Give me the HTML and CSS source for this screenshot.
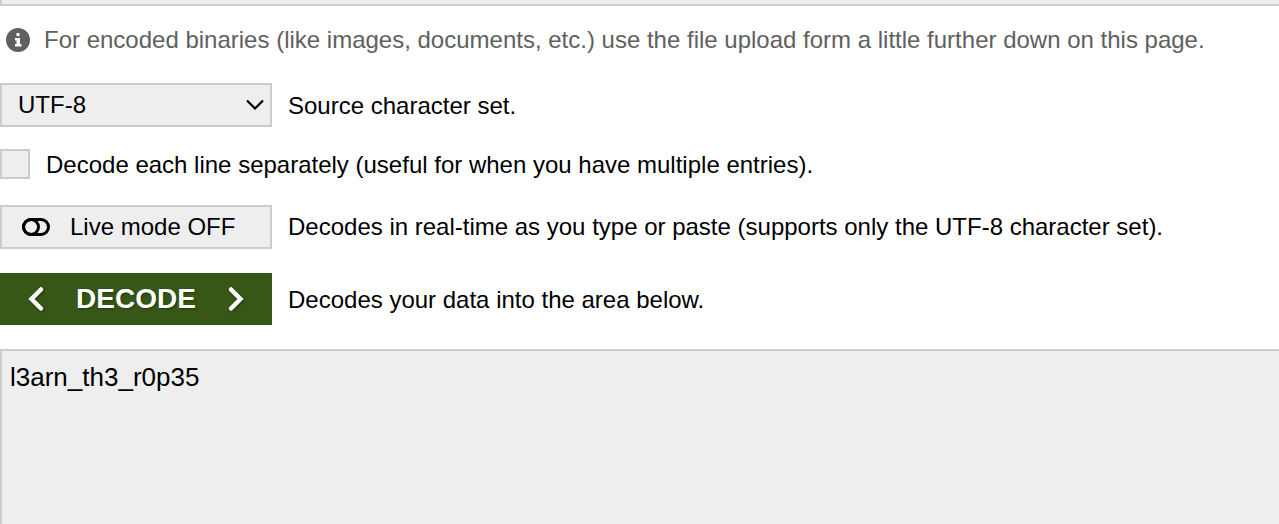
FILE: index.html
```html
<!DOCTYPE html>
<html lang="en">
<head>
<meta charset="utf-8">
<meta name="viewport" content="width=device-width, initial-scale=1">
<title>Decode</title>
<link rel="stylesheet" href="styles.css">
</head>
<body>
<form class="decoder">
  <textarea class="field source" aria-label="Data to decode"></textarea>
  <p class="note">
    <svg class="info-icon" viewBox="0 0 24 24" aria-hidden="true"><circle cx="12" cy="12" r="12" fill="#606060"/><path fill="#fff" d="M10.500 5h3v3h-3zM9 10h5v6h1.500v2.500h-6.500V16h1.500v-3.500H9z"/></svg>
    <span>For encoded binaries (like images, documents, etc.) use the file upload form a little further down on this page.</span>
  </p>
  <div class="row charset-row">
    <span class="select-box">
      <select class="control select" id="charset"><option>UTF-8</option></select>
      <svg class="arrow" viewBox="0 0 18 12" aria-hidden="true"><path d="M1 1.500 9 9.500 17 1.500" fill="none" stroke="#000" stroke-width="2.200"/></svg>
    </span>
    <label class="caption" for="charset">Source character set.</label>
  </div>
  <div class="row lines-row">
    <input class="check" type="checkbox" id="lines">
    <label class="caption" for="lines">Decode each line separately (useful for when you have multiple entries).</label>
  </div>
  <div class="row live-row">
    <button class="control live" type="button">
      <svg class="toggle" viewBox="0 0 28 18" aria-hidden="true"><g fill="none" stroke="#000" stroke-width="3"><rect x="1.500" y="1.500" width="25" height="15" rx="7.500"/><circle cx="9" cy="9" r="7.500"/></g><path d="M9 0h10v3H13z"/><path d="M9 18h10v-3H13z"/></svg>
      <span>Live mode OFF</span>
    </button>
    <span>Decodes in real-time as you type or paste (supports only the UTF-8 character set).</span>
  </div>
  <div class="row decode-row">
    <button class="decode" type="button">
      <svg class="chevron" viewBox="0 0 16 24" aria-hidden="true"><path d="M13 2.500 3.500 12 13 21.500" fill="none" stroke="#fff" stroke-width="4.500" stroke-linecap="round"/></svg>
      <span>DECODE</span>
      <svg class="chevron" viewBox="0 0 16 24" aria-hidden="true"><path d="M3 2.500 12.500 12 3 21.500" fill="none" stroke="#fff" stroke-width="4.500" stroke-linecap="round"/></svg>
    </button>
    <span class="caption">Decodes your data into the area below.</span>
  </div>
  <textarea class="field result" aria-label="Decoded data" spellcheck="false">l3arn_th3_r0p35</textarea>
</form>
</body>
</html>
```
FILE: styles.css
```css
* {
  box-sizing: border-box;
}

body {
  margin: 0;
  background: #fff;
  color: #000;
  font: 24px/28px "Liberation Sans", Arial, sans-serif;
}

.decoder {
  display: flex;
  flex-direction: column;
  min-height: 100vh;
}

.field {
  display: block;
  width: 100%;
  margin: 0;
  border: 2px solid #ccc;
  border-right: 0;
  border-radius: 0;
  background: #eee;
  color: #000;
  font: inherit;
  outline: 0;
  resize: none;
}

.source {
  height: 6px;
  padding: 0;
  border-top: 0;
  overflow: hidden;
}

.note {
  display: flex;
  align-items: center;
  gap: 14px;
  margin: 20px 0 29px;
  padding-left: 6px;
  color: #606060;
}

.info-icon {
  flex: none;
  width: 24px;
  height: 24px;
}

.row {
  display: flex;
  align-items: center;
  gap: 16px;
  margin-bottom: 24px;
}

.caption {
  padding-top: 2px;
}

.control {
  width: 272px;
  height: 44px;
  border: 2px solid #ccc;
  border-radius: 0;
  background: #eee;
  color: #000;
  font: inherit;
}

.charset-row {
  margin-bottom: 22px;
}

.select-box {
  position: relative;
  display: flex;
}

.select {
  appearance: none;
  padding: 0 16px;
}

.arrow {
  position: absolute;
  top: 16px;
  right: 8px;
  width: 18px;
  height: 12px;
  pointer-events: none;
}

.lines-row {
  margin-bottom: 26px;
}

.check {
  appearance: none;
  width: 30px;
  height: 30px;
  margin: 0;
  border: 2px solid #ccc;
  background: #eee;
}

.check:checked {
  background: #365716;
}

.live {
  display: flex;
  align-items: center;
  gap: 20px;
  padding: 0 20px;
}

.toggle {
  width: 28px;
  height: 18px;
}

.decode {
  display: flex;
  align-items: center;
  justify-content: space-between;
  width: 272px;
  height: 52px;
  padding: 0 28px;
  border: 0;
  background: #365716;
  color: #fff;
  font: inherit;
  font-size: 28px;
  font-weight: bold;
  text-shadow: 1px 1px 2px #203808;
}

.chevron {
  width: 16px;
  height: 24px;
  overflow: visible;
  filter: drop-shadow(1px 1px 1px #203808);
}

.result {
  flex: 1;
  padding: 12px 8px;
  border-bottom: 0;
  font-size: 26px;
}
```
